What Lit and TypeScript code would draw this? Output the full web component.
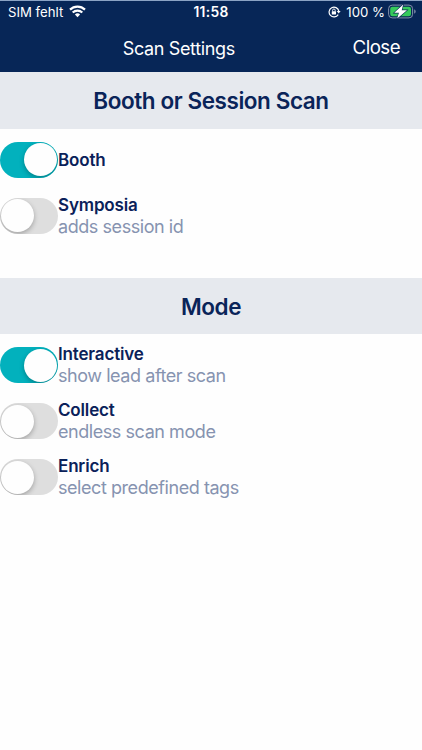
import { LitElement, html, css, svg } from "lit";
import { customElement, property } from "lit/decorators.js";

@customElement("toggle-row")
class ToggleRow extends LitElement {
  @property() label = "";
  @property() hint = "";
  @property({ type: Boolean, reflect: true }) on = false;
  static styles = css`
    :host { display: flex; align-items: center; height: 56.1px; }
    .track { box-sizing: border-box; flex: none; display: flex; width: 57.5px; height: 36px; padding: 1.5px 1px; border-radius: 18px; background: #dedede; overflow: hidden; }
    .knob { width: 33px; height: 33px; border-radius: 50%; background: #fefefe; box-shadow: 0 2px 5px rgba(0, 0, 0, 0.28); }
    :host([on]) .track { background: #02b1bd; justify-content: flex-end; }
    .text { display: flex; flex-direction: column; align-items: flex-start; padding-left: 0.5px; line-height: 22px; white-space: nowrap; }
    .label { font-size: 17px; letter-spacing: -0.16px; font-weight: 600; color: #0a2159; }
    .hint { font-size: 18px; letter-spacing: -0.44px; color: #8693b0; }
  `;
  render() {
    return html`<div class="track"><div class="knob"></div></div>
      <div class="text"><span class="label">${this.label}</span>${this.hint ? html`<span class="hint">${this.hint}</span>` : ""}</div>`;
  }
}

const wifi = svg`<svg width="17" height="13" viewBox="0 0 17 13" fill="#fff">
  <path d="M8.5 12.2 5.9 9.5a3.8 3.8 0 0 1 5.2 0z"/>
  <path d="M3.7 7.5a6.9 6.9 0 0 1 9.6 0" fill="none" stroke="#fff" stroke-width="2.2"/>
  <path d="M1 4.6a10.8 10.8 0 0 1 15 0" fill="none" stroke="#fff" stroke-width="2.2"/>
</svg>`;

const lock = svg`<svg width="13" height="12" viewBox="0 0 13 12" fill="none" stroke="#fff">
  <path d="M10.2 8.6A4.9 4.9 0 1 1 10.8 5" stroke-width="1.2"/>
  <path d="M8.7 5h3.9l-1.9 2.6z" fill="#fff" stroke="none"/>
  <rect x="3.8" y="5.2" width="4.2" height="3.4" rx=".5" fill="#fff" stroke="none"/>
  <path d="M4.6 5.4V4.3a1.3 1.3 0 0 1 2.6 0v1.1" stroke-width=".9"/>
</svg>`;

const battery = svg`<svg width="28" height="15" viewBox="0 0 28 15">
  <rect x=".6" y="1.1" width="24" height="12.8" rx="3.6" fill="none" stroke="#8290aa" stroke-width="1"/>
  <path d="M26.2 5.3v4.4q1.5-.7 1.5-2.2t-1.5-2.2z" fill="#8290aa"/>
  <rect x="2.2" y="2.7" width="20.8" height="9.6" rx="2.2" fill="#35ca5b"/>
  <path d="M15.2 .4 6.2 8.8h4.7L9.2 14.6 19 6.2h-5.3z" fill="#fff" stroke="#082656" stroke-width="1.2" paint-order="stroke"/>
</svg>`;

@customElement("app-root")
class AppRoot extends LitElement {
  static styles = css`
    :host { display: block; height: 750px; background: #fefefe; font-family: Inter, "Liberation Sans", sans-serif; overflow: hidden; }
    svg { display: block; flex: none; }
    .top { box-sizing: border-box; height: 72px; background: #072657; color: #fff; border-top: 1px solid #8ba3c4; display: flex; flex-direction: column; }
    .status { display: grid; grid-template-columns: 1fr auto 1fr; align-items: center; height: 22px; padding: 0 6px 0 8px; font-size: 13.2px; white-space: nowrap; }
    .side { display: flex; align-items: center; gap: 6px; }
    .right { justify-content: flex-end; gap: 5px; }
    .pct { margin-right: -2px; }
    .time { font-weight: 600; font-size: 13.8px; letter-spacing: 0.3px; padding-right: 2px; }
    .nav { display: flex; align-items: center; height: 49px; padding: 2px 22px 0 5px; white-space: nowrap; }
    .title { flex: 1; text-align: center; font-size: 18px; letter-spacing: -0.35px; padding-top: 1px; }
    .close { font-size: 18.7px; letter-spacing: -0.55px; padding-bottom: 2px; }
    .band { box-sizing: border-box; height: 56px; display: flex; align-items: center; justify-content: center; background: #e6e9ee; color: #0a2459; font-size: 22.5px; letter-spacing: -0.43px; font-weight: 600; padding-top: 1px; }
    .lead { height: 56.6px; }
    .group { padding-top: 3.1px; }
    .first { box-sizing: border-box; height: 149.4px; }
  `;
  render() {
    return html`
      <header class="top">
        <div class="status">
          <div class="side"><span class="carrier">SIM fehlt</span>${wifi}</div>
          <span class="time">11:58</span>
          <div class="side right">${lock}<span class="pct">100 %</span>${battery}</div>
        </div>
        <div class="nav"><span class="title">Scan Settings</span><span class="close">Close</span></div>
      </header>
      <div class="band lead">Booth or Session Scan</div>
      <div class="group first">
        <toggle-row label="Booth" on></toggle-row>
        <toggle-row label="Symposia" hint="adds session id"></toggle-row>
      </div>
      <div class="band">Mode</div>
      <div class="group">
        <toggle-row label="Interactive" hint="show lead after scan" on></toggle-row>
        <toggle-row label="Collect" hint="endless scan mode"></toggle-row>
        <toggle-row label="Enrich" hint="select predefined tags"></toggle-row>
      </div>`;
  }
}
